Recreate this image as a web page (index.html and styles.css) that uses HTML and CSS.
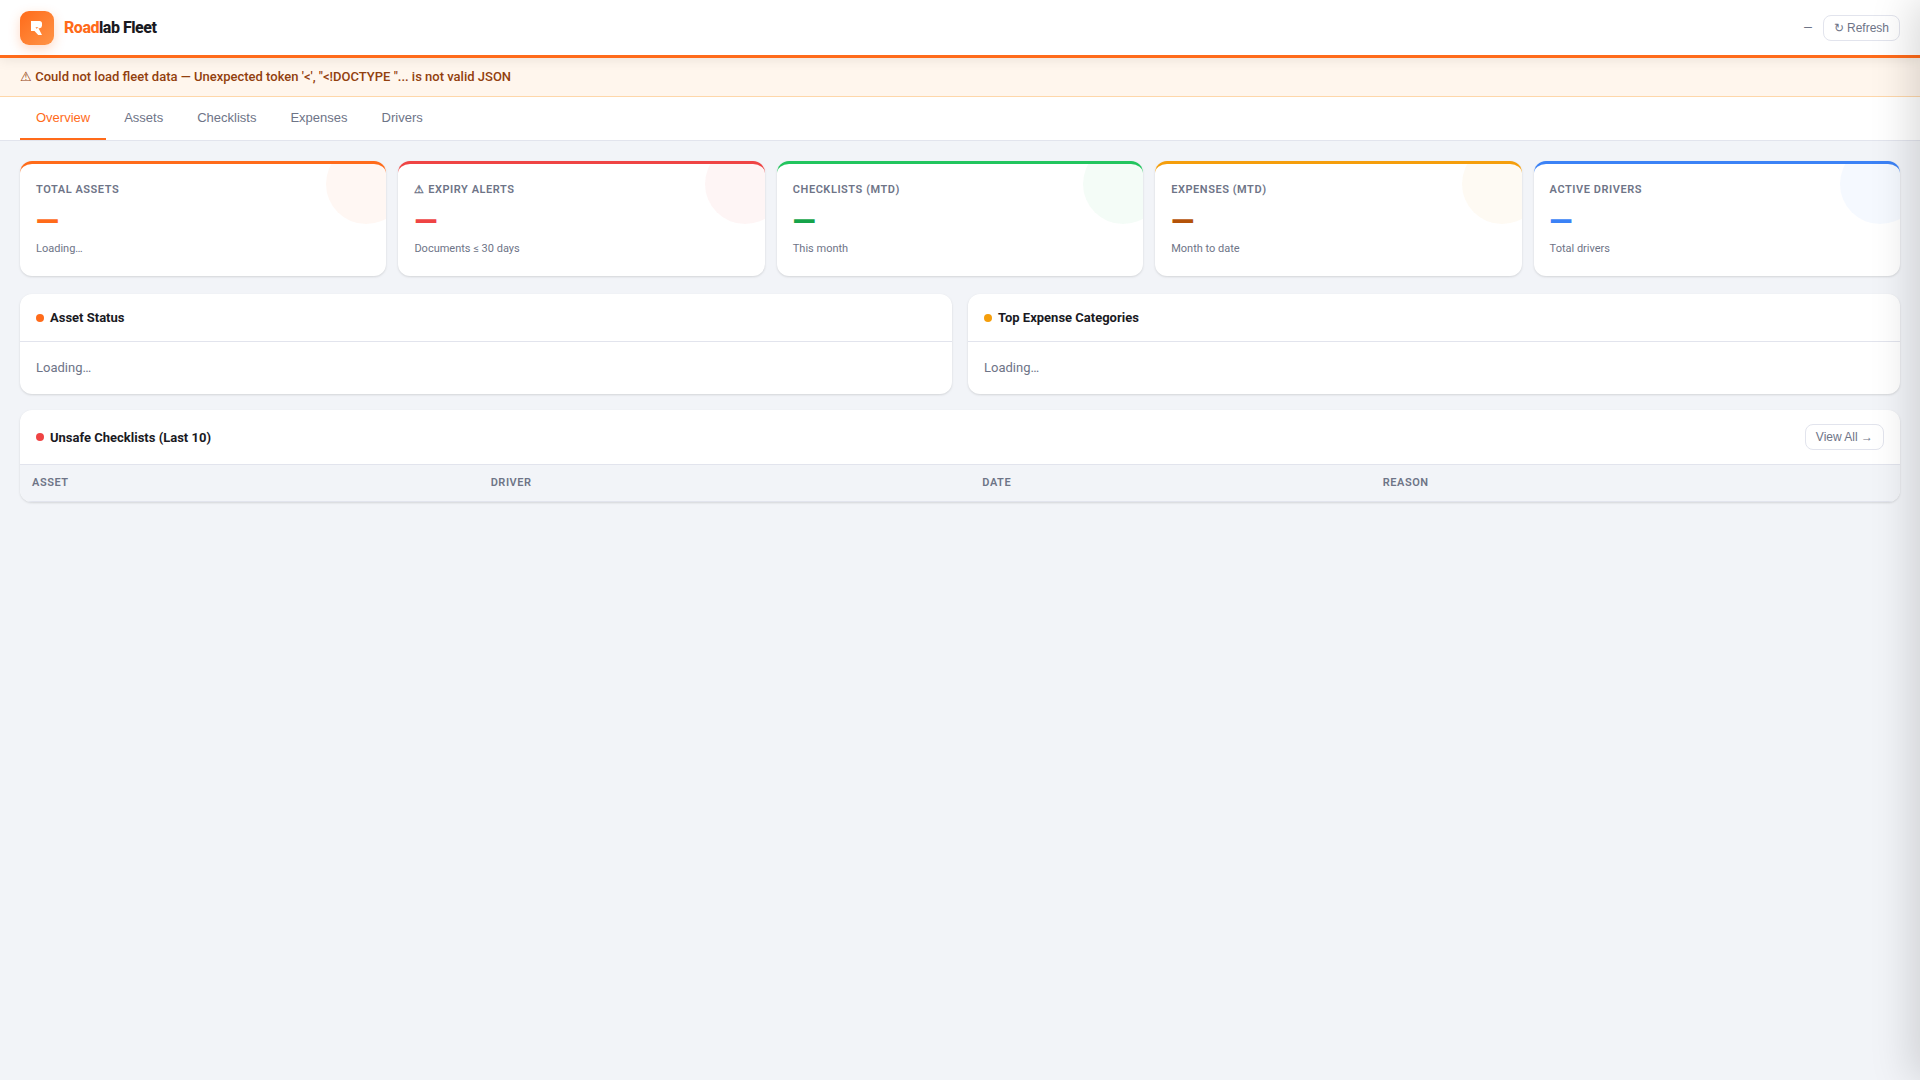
FILE: index.html
```html
<!DOCTYPE html>
<html lang="en">
<head>
<meta charset="utf-8">
<meta name="viewport" content="width=device-width, initial-scale=1">
<title>Roadlab Fleet</title>
<link rel="stylesheet" href="styles.css">
</head>
<body>
<header class="topbar">
  <div class="brand">
    <span class="brand-mark">
      <svg width="34" height="34" viewBox="0 0 34 34" aria-hidden="true"><path fill="#fff" fill-rule="evenodd" d="M11 10h8.500q2.500 0 2.500 2.500v2q0 2.500-2.500 2.700H18.500L22 24h-3.800L14.500 20H11z M15.500 16.200h3l-2 1.600z"/></svg>
    </span>
    <h1 class="brand-name"><span class="brand-accent">Road</span>lab Fleet</h1>
  </div>
  <div class="topbar-actions">
    <span class="updated">—</span>
    <button class="btn" type="button">↻ Refresh</button>
  </div>
</header>
<div class="alert" role="alert">⚠ Could not load fleet data — Unexpected token '&lt;', "&lt;!DOCTYPE "... is not valid JSON</div>
<nav class="tabs">
  <button class="tab tab-active" type="button">Overview</button>
  <button class="tab" type="button">Assets</button>
  <button class="tab" type="button">Checklists</button>
  <button class="tab" type="button">Expenses</button>
  <button class="tab" type="button">Drivers</button>
</nav>
<main class="content">
  <section class="stats">
    <article class="stat stat-orange">
      <div class="stat-label">Total Assets</div>
      <div class="stat-value">—</div>
      <div class="stat-note">Loading…</div>
    </article>
    <article class="stat stat-red">
      <div class="stat-label">⚠ Expiry Alerts</div>
      <div class="stat-value">—</div>
      <div class="stat-note">Documents ≤ 30 days</div>
    </article>
    <article class="stat stat-green">
      <div class="stat-label">Checklists (MTD)</div>
      <div class="stat-value">—</div>
      <div class="stat-note">This month</div>
    </article>
    <article class="stat stat-amber">
      <div class="stat-label">Expenses (MTD)</div>
      <div class="stat-value">—</div>
      <div class="stat-note">Month to date</div>
    </article>
    <article class="stat stat-blue">
      <div class="stat-label">Active Drivers</div>
      <div class="stat-value">—</div>
      <div class="stat-note">Total drivers</div>
    </article>
  </section>
  <div class="panels">
    <section class="panel">
      <div class="panel-head"><h2 class="panel-title"><span class="dot dot-orange"></span>Asset Status</h2></div>
      <div class="panel-body">Loading…</div>
    </section>
    <section class="panel">
      <div class="panel-head"><h2 class="panel-title"><span class="dot dot-amber"></span>Top Expense Categories</h2></div>
      <div class="panel-body">Loading…</div>
    </section>
  </div>
  <section class="panel">
    <div class="panel-head">
      <h2 class="panel-title"><span class="dot dot-red"></span>Unsafe Checklists (Last 10)</h2>
      <button class="btn" type="button">View All →</button>
    </div>
    <table class="table">
      <thead><tr><th scope="col">Asset</th><th scope="col">Driver</th><th scope="col">Date</th><th scope="col">Reason</th></tr></thead>
      <tbody></tbody>
    </table>
  </section>
</main>
<aside class="drawer" aria-hidden="true"></aside>
</body>
</html>
```

FILE: styles.css
```css
:root {
  --orange: #ff6b1a;
  --red: #ef4444;
  --green: #22c55e;
  --amber: #f59e0b;
  --blue: #3b82f6;
  --ink: #1a1a1f;
  --muted: #6e7487;
  --line: #e2e4ed;
  --page: #f2f4f8;
  --shadow: 0 1px 3px rgba(0, 0, 0, 0.08), 0 1px 2px rgba(0, 0, 0, 0.06);
}

* {
  box-sizing: border-box;
}

body {
  margin: 0;
  min-height: 100vh;
  background: var(--page);
  color: var(--ink);
  font-family: Roboto, "Liberation Sans", sans-serif;
  font-size: 13px;
  line-height: 18px;
}

.topbar {
  position: relative;
  z-index: 1;
  display: flex;
  align-items: center;
  justify-content: space-between;
  height: 58px;
  padding: 0 20px;
  background: #fff;
  border-bottom: 3px solid var(--orange);
  box-shadow: 0 2px 12px rgba(0, 0, 0, 0.08);
}

.brand,
.topbar-actions {
  display: flex;
  align-items: center;
  gap: 10px;
}

.brand-mark {
  width: 34px;
  height: 34px;
  border-radius: 9px;
  background: linear-gradient(135deg, var(--orange), #ff9447);
  box-shadow: 0 4px 12px rgba(255, 107, 26, 0.25);
}

.brand-mark svg {
  display: block;
}

.brand-name {
  margin: 0;
  font-size: 16px;
  font-weight: 800;
  letter-spacing: -0.03em;
}

.brand-accent {
  color: var(--orange);
}

.updated {
  color: var(--muted);
  font: 12px/18px "Liberation Sans", sans-serif;
  font-family: Roboto, sans-serif;
}

.btn {
  padding: 5px 10px;
  border: 1px solid var(--line);
  border-radius: 8px;
  background: #fff;
  color: var(--muted);
  font: 12px/14px "Liberation Sans", sans-serif;
}

.alert {
  padding: 10px 20px;
  border-bottom: 1px solid #fed7aa;
  background: #fff6ed;
  color: #92400e;
  font-weight: 500;
}

.tabs {
  display: flex;
  gap: 2px;
  padding: 0 20px;
  background: #fff;
  border-bottom: 1px solid var(--line);
}

.tab {
  padding: 13px 16px;
  border: 0;
  border-bottom: 2px solid transparent;
  background: none;
  color: var(--muted);
  font: 13px/15px "Liberation Sans", sans-serif;
}

.tab-active {
  border-bottom-color: var(--orange);
  color: var(--orange);
}

.content {
  padding: 20px;
}

.stats {
  display: grid;
  grid-template-columns: repeat(5, 1fr);
  gap: 12px;
  margin-bottom: 18px;
}

.stat {
  --accent: var(--orange);
  --value: var(--accent);
  position: relative;
  overflow: hidden;
  padding: 18px 16px;
  border-top: 3px solid var(--accent);
  border-radius: 12px;
  background: #fff;
  box-shadow: var(--shadow);
}

.stat::after {
  content: "";
  position: absolute;
  top: -20px;
  right: -20px;
  width: 80px;
  height: 80px;
  border-radius: 50%;
  background: var(--accent);
  opacity: 0.05;
}

.stat-red { --accent: var(--red); }
.stat-green { --accent: var(--green); --value: #16a34a; }
.stat-amber { --accent: var(--amber); --value: #b45309; }
.stat-blue { --accent: var(--blue); }

.stat-label,
.table th {
  color: var(--muted);
  font-size: 11px;
  font-weight: 600;
  letter-spacing: 0.05em;
  text-transform: uppercase;
}

.stat-label {
  line-height: 16px;
}

.stat-value {
  margin: 8px 0 4px;
  color: var(--value);
  font-size: 30px;
  font-weight: 900;
  line-height: 30px;
}

.stat-note {
  color: var(--muted);
  font-size: 11px;
}

.panels {
  display: grid;
  grid-template-columns: 1fr 1fr;
  gap: 16px;
  margin-bottom: 16px;
}

.panel {
  overflow: hidden;
  border-radius: 12px;
  background: #fff;
  box-shadow: var(--shadow);
}

.panel-head {
  display: flex;
  align-items: center;
  justify-content: space-between;
  padding: 14px 16px;
  border-bottom: 1px solid var(--line);
}

.panel-title {
  display: flex;
  align-items: center;
  gap: 6px;
  margin: 0;
  font-size: 13px;
  font-weight: 700;
  line-height: 19px;
}

.dot {
  width: 8px;
  height: 8px;
  border-radius: 50%;
}

.dot-orange { background: var(--orange); }
.dot-amber { background: var(--amber); }
.dot-red { background: var(--red); }

.panel-body {
  padding: 16px;
  color: var(--muted);
  line-height: 20px;
}

.table {
  width: 100%;
  border-collapse: collapse;
}

.table th {
  padding: 9px 12px;
  border-bottom: 1px solid var(--line);
  background: var(--page);
  text-align: left;
}

.drawer {
  position: fixed;
  z-index: 2;
  top: 0;
  bottom: 0;
  left: 100%;
  width: 480px;
  background: #fff;
  box-shadow: -8px 0 40px rgba(0, 0, 0, 0.15);
}
```
